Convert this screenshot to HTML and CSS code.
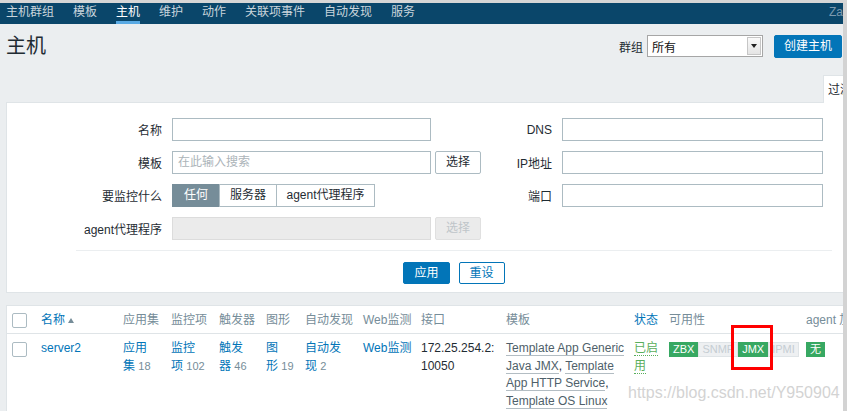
FILE: index.html
```html
<!DOCTYPE html>
<html lang="zh-CN">
<head>
<meta charset="utf-8">
<title>主机</title>
<link rel="stylesheet" href="styles.css">
</head>
<body>
<div class="page">
  <div class="frame">
    <div class="viewport">
      <nav class="topnav">
        <ul class="menu">
          <li><a>主机群组</a></li>
          <li><a>模板</a></li>
          <li class="active"><a>主机</a></li>
          <li><a>维护</a></li>
          <li><a>动作</a></li>
          <li><a>关联项事件</a></li>
          <li><a>自动发现</a></li>
          <li><a>服务</a></li>
        </ul>
        <span class="user">Za</span>
      </nav>

      <header class="page-header">
        <h1>主机</h1>
        <div class="header-controls">
          <span class="header-label">群组</span>
          <div class="select"><span class="select-text">所有</span><span class="select-arrow"></span></div>
          <button class="btn btn-primary btn-create">创建主机</button>
        </div>
      </header>

      <section class="filter">
        <div class="filter-tabs"><span class="filter-tab">过滤器</span></div>
        <div class="filter-panel">
          <div class="filter-grid">
            <label class="flabel">名称</label>
            <div class="control"><span class="input"></span></div>
            <label class="flabel">DNS</label>
            <div class="control"><span class="input wide"></span></div>

            <label class="flabel">模板</label>
            <div class="control"><span class="input placeholder">在此输入搜索</span><button class="btn btn-grey">选择</button></div>
            <label class="flabel">IP地址</label>
            <div class="control"><span class="input wide"></span></div>

            <label class="flabel">要监控什么</label>
            <div class="control">
              <div class="radio-group">
                <span class="radio active r1">任何</span><span class="radio r2">服务器</span><span class="radio r3">agent代理程序</span>
              </div>
            </div>
            <label class="flabel">端口</label>
            <div class="control"><span class="input wide"></span></div>

            <label class="flabel">agent代理程序</label>
            <div class="control"><span class="input disabled"></span><button class="btn btn-grey disabled">选择</button></div>
          </div>
          <div class="filter-sep"></div>
          <div class="filter-buttons">
            <button class="btn btn-primary btn-sm">应用</button>
            <button class="btn btn-alt btn-sm">重设</button>
          </div>
        </div>
      </section>

      <section class="table-panel">
        <table class="list">
          <colgroup>
            <col class="c-chk"><col class="c-name"><col class="c-48"><col class="c-48"><col class="c-47"><col class="c-39"><col class="c-58"><col class="c-58"><col class="c-85"><col class="c-128"><col class="c-35"><col class="c-137"><col class="c-100">
          </colgroup>
          <thead>
            <tr>
              <th><span class="check"></span></th>
              <th><a class="link">名称</a><span class="sort-up"></span></th>
              <th>应用集</th>
              <th>监控项</th>
              <th>触发器</th>
              <th>图形</th>
              <th>自动发现</th>
              <th>Web监测</th>
              <th>接口</th>
              <th>模板</th>
              <th><a class="link">状态</a></th>
              <th>可用性</th>
              <th>agent 加密</th>
            </tr>
          </thead>
          <tbody>
            <tr>
              <td><span class="check"></span></td>
              <td><a class="link">server2</a></td>
              <td><a class="link">应用<br>集</a> <span class="count">18</span></td>
              <td><a class="link">监控<br>项</a> <span class="count">102</span></td>
              <td><a class="link">触发<br>器</a> <span class="count">46</span></td>
              <td><a class="link">图<br>形</a> <span class="count">19</span></td>
              <td><a class="link">自动发<br>现</a> <span class="count">2</span></td>
              <td><a class="link">Web监测</a></td>
              <td>172.25.254.2:<br>10050</td>
              <td><a class="link-alt">Template App Generic<br>Java JMX</a>, <a class="link-alt">Template<br>App HTTP Service</a>,<br><a class="link-alt">Template OS Linux</a></td>
              <td><span class="status-on">已启<br>用</span></td>
              <td><span class="badges"><span class="badge green">ZBX</span><span class="badge grey">SNMP</span><span class="badge green">JMX</span><span class="badge grey">IPMI</span></span></td>
              <td><span class="badge green">无</span></td>
            </tr>
          </tbody>
        </table>
      </section>
    </div>
    <div class="scrollbar"></div>
  </div>
  <div class="highlight"></div>
  <div class="watermark">https://blog.csdn.net/Y950904</div>
</div>
</body>
</html>
```

FILE: styles.css
```css
* { box-sizing: border-box; }
html, body { margin: 0; padding: 0; }
body {
  font-family: "Liberation Sans", "Noto Sans CJK SC", sans-serif;
  font-size: 12px;
  color: #1f2c33;
  background: #fff;
}

.page {
  position: relative;
  width: 847px;
  height: 411px;
  overflow: hidden;
  border-top: 3px solid #d6d6d6;
}
.frame { display: flex; height: 408px; }
.viewport {
  flex: none;
  width: 843px;
  overflow: hidden;
  background: #ebeef0;
}
.scrollbar { flex: 1; background: #d3d3d3; }

/* top navigation */
.topnav {
  display: flex;
  justify-content: space-between;
  height: 21px;
  background: #0a466a;
  padding-left: 6px;
}
.menu { display: flex; gap: 19px; margin: 0; padding: 0; list-style: none; }
.menu a {
  display: block;
  height: 21px;
  line-height: 18px;
  color: #c9d5dc;
  border-bottom: 3px solid transparent;
}
.menu .active a { color: #fff; border-bottom-color: #5aaae4; }
.user { line-height: 18px; color: #7d9ab0; }

/* header */
.page-header {
  display: flex;
  align-items: center;
  justify-content: space-between;
  padding: 10px 1px 17px 6px;
}
.page-header h1 { margin: 0; font-size: 20px; font-weight: 400; line-height: 24px; color: #1f2c33; }
.header-controls { display: flex; align-items: center; }
.header-label { margin-right: 4px; }
.select {
  display: flex;
  align-items: center;
  width: 116px;
  height: 22px;
  margin-right: 11px;
  padding-left: 4px;
  background: #fff;
  border: 1px solid #a6a6a6;
}
.select-text { flex: 1; color: #111; }
.select-arrow {
  display: flex;
  align-items: center;
  justify-content: center;
  width: 14px;
  height: 18px;
  margin-right: 1px;
  border: 1px solid #c6c6c6;
  background: linear-gradient(#fafafa, #e4e4e4);
}
.select-arrow::after {
  content: "";
  border-left: 3px solid transparent;
  border-right: 3px solid transparent;
  border-top: 4px solid #222;
}

.btn {
  height: 23px;
  padding: 0 10px;
  border: 1px solid;
  border-radius: 2px;
  font: inherit;
  line-height: 21px;
  cursor: pointer;
}
.btn-primary { background: #0275b8; border-color: #0275b8; color: #fff; }
.btn-create { padding: 0 9px; }
.btn-grey { width: 46px; padding: 0; background: #fff; border-color: #acbbc2; color: #1f2c33; }
.btn-grey.disabled { background: #ebebeb; border-color: #e0e0e0; color: #bfc5c9; }
.btn-alt { background: #fff; border-color: #0275b8; color: #0275b8; }
.btn-sm { height: 22px; line-height: 20px; }

/* filter */
.filter { width: 896px; margin-left: 6px; }
.filter-tabs { display: flex; justify-content: flex-end; height: 27px; }
.filter-tab {
  position: relative;
  z-index: 1;
  width: 79px;
  height: 28px;
  margin-bottom: -1px;
  padding: 6px 0 0 4px;
  line-height: 16px;
  background: #fff;
  border: 1px solid #dfe4e7;
  border-bottom: none;
}
.filter-panel {
  background: #fff;
  border: 1px solid #dfe4e7;
  padding: 15px 0 8px;
}
.filter-grid {
  display: grid;
  grid-template-columns: 155px 309px 61px 261px;
  grid-auto-rows: 23px;
  column-gap: 10px;
  row-gap: 10px;
  align-items: center;
}
.flabel { text-align: right; white-space: nowrap; }
.control { display: flex; gap: 4px; height: 23px; }
.input {
  display: block;
  width: 259px;
  height: 23px;
  padding: 0 5px;
  line-height: 21px;
  background: #fff;
  border: 1px solid #acbbc2;
}
.input.wide { width: 261px; }
.input.placeholder { color: #acb4b9; }
.input.disabled { background: #ebebeb; border-color: #dcdcdc; }

.radio-group { display: flex; }
.radio {
  display: block;
  height: 23px;
  line-height: 21px;
  text-align: center;
  background: #fff;
  border: 1px solid #acbbc2;
  color: #1f2c33;
}
.radio + .radio { margin-left: -1px; }
.radio.r1 { width: 48px; }
.radio.r2 { width: 58px; }
.radio.r3 { width: 99px; }
.radio.active { background: #768d99; border-color: #768d99; color: #fff; }

.filter-sep { height: 1px; margin: 10px 69px 11px; background: #ebeef0; }
.filter-buttons { display: flex; justify-content: center; gap: 9px; }

/* table */
.table-panel {
  width: 896px;
  margin: 12px 0 0 6px;
  background: #fff;
  border: 1px solid #dfe4e7;
  border-bottom: none;
  height: 200px;
}
.list { width: 894px; border-collapse: collapse; table-layout: fixed; }
.c-chk { width: 29px; }
.c-name { width: 82px; }
.c-48 { width: 48px; }
.c-47 { width: 47px; }
.c-39 { width: 39px; }
.c-58 { width: 58px; }
.c-85 { width: 85px; }
.c-128 { width: 128px; }
.c-35 { width: 35px; }
.c-137 { width: 137px; }
.c-100 { width: 100px; }

.list th {
  padding: 6px 5px 5px;
  line-height: 16px;
  font-weight: 400;
  text-align: left;
  color: #768d99;
  white-space: nowrap;
  border-bottom: 1px solid #dfe4e7;
  vertical-align: middle;
}
.list td {
  padding: 6px 5px;
  line-height: 17.5px;
  text-align: left;
  vertical-align: top;
  white-space: nowrap;
}
.check {
  display: inline-block;
  width: 15px;
  height: 15px;
  vertical-align: middle;
  background: #fff;
  border: 1px solid #acbbc2;
  border-radius: 2px;
}
.link { color: #0275b8; }
.sort-up {
  display: inline-block;
  margin-left: 3px;
  vertical-align: 1px;
  border-left: 3px solid transparent;
  border-right: 3px solid transparent;
  border-bottom: 5px solid #768d99;
}
.count { font-size: 11px; color: #768d99; }
.link-alt { color: #4f5f6a; border-bottom: 1px solid #b3bdc3; }
.status-on { color: #5aae5c; border-bottom: 1px dotted #5aae5c; }

.badges { display: inline-flex; vertical-align: middle; }
.badge {
  display: inline-block;
  height: 15px;
  padding: 0 3px;
  font-size: 11px;
  line-height: 13px;
  border: 1px solid;
  vertical-align: middle;
}
.badge.green { background: #37a862; border-color: #37a862; color: #fff; }
.badge.grey { background: #eef0f2; border-color: #dfe4e7; color: #c5cdd3; }

/* overlays */
.highlight {
  position: absolute;
  left: 731px;
  top: 322px;
  width: 42px;
  height: 45px;
  border: 3px solid #f00;
}
.watermark {
  position: absolute;
  left: 628px;
  top: 380px;
  font-size: 16px;
  line-height: 20px;
  color: #d3d3d3;
  white-space: nowrap;
}
```
